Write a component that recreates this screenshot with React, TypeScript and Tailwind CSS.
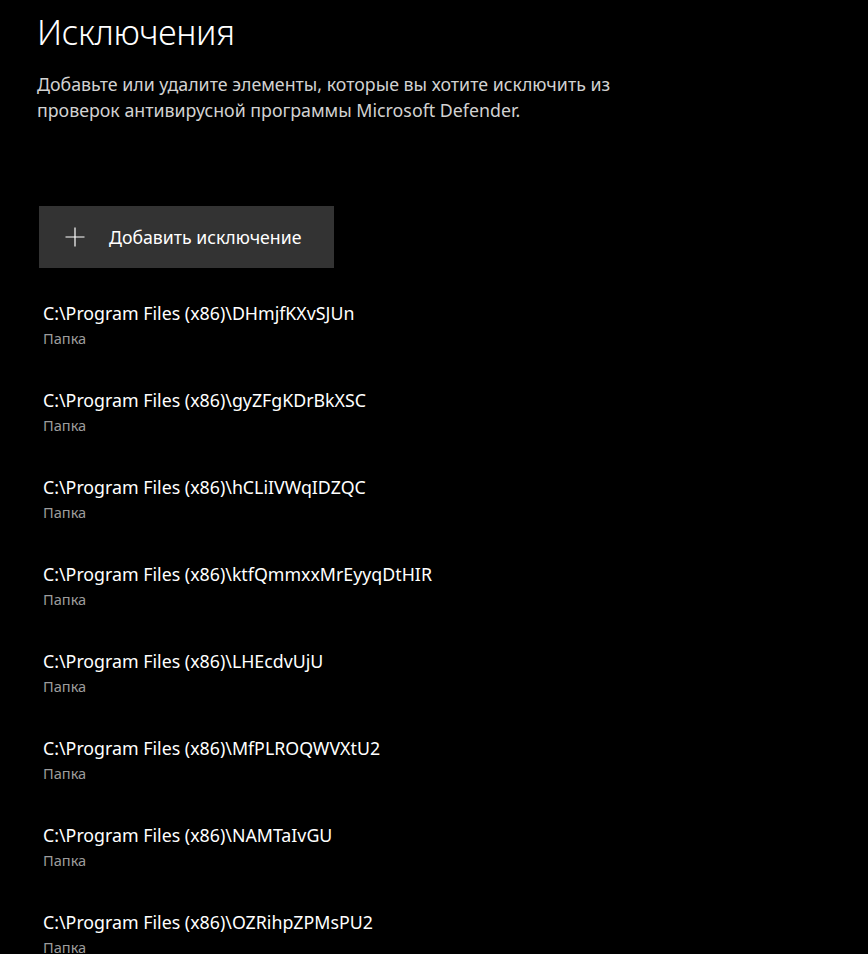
const items = [
  "DHmjfKXvSJUn",
  "gyZFgKDrBkXSC",
  "hCLiIVWqIDZQC",
  "ktfQmmxxMrEyyqDtHIR",
  "LHEcdvUjU",
  "MfPLROQWVXtU2",
  "NAMTaIvGU",
  "OZRihpZPMsPU2",
];

const PlusIcon = () => (
  <svg width="20" height="20" viewBox="0 0 20 20" fill="none">
    <path d="M10 0.5V19.5M0.5 10H19.5" stroke="#ffffff" strokeWidth="1.2" />
  </svg>
);

export default function App() {
  return (
    <div className="h-[954px] w-full bg-black text-white font-['Segoe_UI','Noto_Sans',sans-serif] overflow-hidden">
      <div className="pl-[37px] pt-[8px]">
        <h1 className="text-[34px] font-light leading-[48px] tracking-[-0.3px]">
          Исключения
        </h1>
        <p className="mt-[16px] w-[620px] text-[17.8px] leading-[25.5px] text-[#d2d2d2]">
          Добавьте или удалите элементы, которые вы хотите исключить из
          проверок антивирусной программы Microsoft Defender.
        </p>

        <button className="mt-[83px] ml-[2px] flex h-[62px] w-[295px] items-center bg-[#333333] pl-[26px]">
          <PlusIcon />
          <span className="ml-[24px] text-[17.7px] text-white">
            Добавить исключение
          </span>
        </button>

        <div className="mt-[32px] ml-[6px] flex flex-col gap-[37px]">
          {items.map((name) => (
            <div key={name} className="flex flex-col">
              <span className="text-[17.8px] leading-[26px] text-white">
                C:\Program Files (x86)\{name}
              </span>
              <span className="mt-[1px] text-[14.6px] leading-[23px] text-[#9c9c9c]">
                Папка
              </span>
            </div>
          ))}
        </div>
      </div>
    </div>
  );
}
